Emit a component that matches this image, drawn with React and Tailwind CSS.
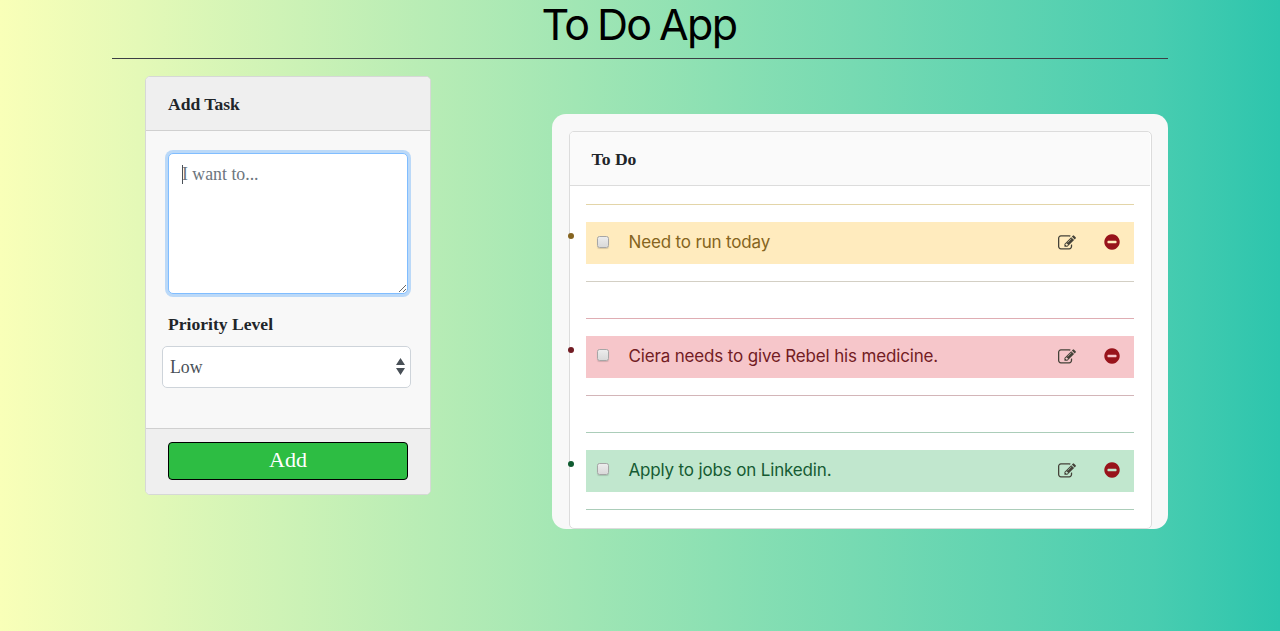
const todos = [
  { text: "Need to run today", row: "bg-[#ffebbe] text-[#856420]", dot: "bg-[#856420]", top: "border-[#e3d5a8]", bottom: "border-[#d3cfc4]", box: "mb-[2px]" },
  { text: "Ciera needs to give Rebel his medicine.", row: "bg-[#f6c6ca] text-[#721c24]", dot: "bg-[#721c24]", top: "border-[#dfadb3]", bottom: "border-[#d3b5b8]", box: "mb-[4px]" },
  { text: "Apply to jobs on Linkedin.", row: "bg-[#c1e7ce] text-[#155b33]", dot: "bg-[#0f5b30]", top: "border-[#abcdb9]", bottom: "border-[#abcdb9]", box: "mb-[4px]" },
];

function EditIcon() {
  return (
    <svg viewBox="0 0 1792 1792" className="h-[18px] w-[18px] fill-[#444238]">
      <path d="M888 1184l116-116-152-152-116 116v56h96v96h56zm440-720q-16-16-33 1l-350 350q-17 17-1 33t33-1l350-350q17-17 1-33zm80 594v190q0 119-84.5 203.5t-203.5 84.5h-832q-119 0-203.5-84.5t-84.5-203.5v-832q0-119 84.5-203.5t203.5-84.5h832q63 0 117 25 15 7 18 23 3 17-9 29l-49 49q-14 14-32 8-23-6-45-6h-832q-66 0-113 47t-47 113v832q0 66 47 113t113 47h832q66 0 113-47t47-113v-126q0-13 9-22l64-64q15-15 35-7t20 29zm-96-738l288 288-672 672h-288v-288zm444 132l-92 92-288-288 92-92q28-28 68-28t68 28l152 152q28 28 28 68t-28 68z" />
    </svg>
  );
}

function RemoveIcon() {
  return (
    <svg viewBox="0 0 1792 1792" className="h-[18px] w-[18px] fill-[#98131b]">
      <path d="M1344 960v-128q0-26-19-45t-45-19h-768q-26 0-45 19t-19 45v128q0 26 19 45t45 19h768q26 0 45-19t19-45zm320-64q0 209-103 385.5t-279.5 279.5-385.5 103-385.5-103-279.5-279.5-103-385.5 103-385.5 279.5-279.5 385.5-103 385.5 103 279.5 279.5 103 385.5z" />
    </svg>
  );
}

function TodoItem({ todo }) {
  return (
    <li className="relative h-[78px]">
      <span className={`absolute top-[29px] -left-[18px] h-[6px] w-[6px] rounded-full ${todo.dot}`} />
      <div className={`h-[18px] border-t ${todo.top}`} />
      <div className={`flex h-[42px] items-center pr-[13px] pl-[11px] ${todo.row}`}>
        <span className={`h-[12px] w-[12px] rounded-[2.5px] border border-[#a6a6a6] bg-linear-to-b from-[#ececec] to-[#d9d9d9] shadow-[0_1px_1px_rgba(0,0,0,0.15)] ${todo.box}`} />
        <span className="ml-[19.5px] flex-1 pb-[2px] font-[Inter,sans-serif] text-[17px] leading-[26px] tracking-[-0.16px]">
          {todo.text}
        </span>
        <EditIcon />
        <span className="mb-[2px] ml-[27px]">
          <RemoveIcon />
        </span>
      </div>
      <div className={`mt-[17px] border-t ${todo.bottom}`} />
    </li>
  );
}

export default function App() {
  return (
    <div className="h-[631px] bg-[linear-gradient(to_right,#f9ffb8,#49cdb0_90%,#2dc5ad)] px-28 font-['Liberation_Serif',serif] text-[#212529]">
      <header className="flex h-[59px] justify-center border-b border-[#3c3f45] pr-[2px]">
        <h1 className="font-[Inter,sans-serif] text-[43px] leading-[48px] tracking-[-1.6px] whitespace-nowrap text-black [word-spacing:-2px]">To Do App</h1>
      </header>
      <main className="flex items-start justify-between">
        <section className="mt-[17px] ml-[33px] flex h-[419px] w-[286px] flex-col overflow-hidden rounded-[5px] border border-[#d6d8d6] bg-[#f8f8f8]">
          <h2 className="h-[54px] border-b border-[#d0d0d0] bg-[#efefef] pl-[22px] text-[17.6px] leading-[54px] font-bold">Add Task</h2>
          <div className="flex-1 px-4 pt-[22px]">
            <div className="relative mx-[6px] h-[142px]">
              <textarea
                placeholder="I want to..."
                className="block h-[141px] w-[240px] resize rounded-[5px] border border-[#80bdff] bg-white px-[13px] py-[6px] text-[17.8px] leading-[28px] shadow-[0_0_0_3px_#bbd9f8] outline-none placeholder:text-[#6c757d]"
              />
              <span className="absolute top-[12px] left-[14px] h-[19px] w-px bg-[#495057]" />
            </div>
            <h3 className="mt-4 ml-[6px] text-[17.6px] leading-[27px] font-bold">Priority Level</h3>
            <div className="mt-[8px] flex h-[42px] w-[249px] items-center justify-between rounded-[5px] border border-[#ced4da] bg-white pr-[5px] pl-[7px] text-[17.8px] text-[#495057]">
              <span>Low</span>
              <svg viewBox="0 0 9 18" className="h-[18px] w-[9px] fill-[#495057]">
                <path d="M0 7 4.5 0 9 7zM0 10h9L4.5 17z" />
              </svg>
            </div>
          </div>
          <div className="h-[66px] border-t border-[#d0d0d0] bg-[#efefef] px-[22px] pt-[13px]">
            <button className="block h-[38px] w-full rounded-[4px] border border-black bg-[#2dbd43] pb-[2px] text-[22px] leading-[34px] text-white">Add</button>
          </div>
        </section>
        <section className="mt-[55px] h-[415px] w-[616px] rounded-[14px] bg-[#f8f8f8] pt-[17px] pr-4 pl-[17px]">
          <div className="h-[398px] rounded-[5px] border border-[#dcdcdc] bg-white">
            <h2 className="mr-px h-[54px] rounded-t-[4px] border-b border-[#dcdcdc] bg-[#fafafa] pl-[21.6px] text-[17.6px] leading-[54px] font-bold">To Do</h2>
            <ul className="flex flex-col gap-9 pt-[18px] pr-[17px] pl-4">
              {todos.map((todo) => (
                <TodoItem key={todo.text} todo={todo} />
              ))}
            </ul>
          </div>
        </section>
      </main>
    </div>
  );
}
